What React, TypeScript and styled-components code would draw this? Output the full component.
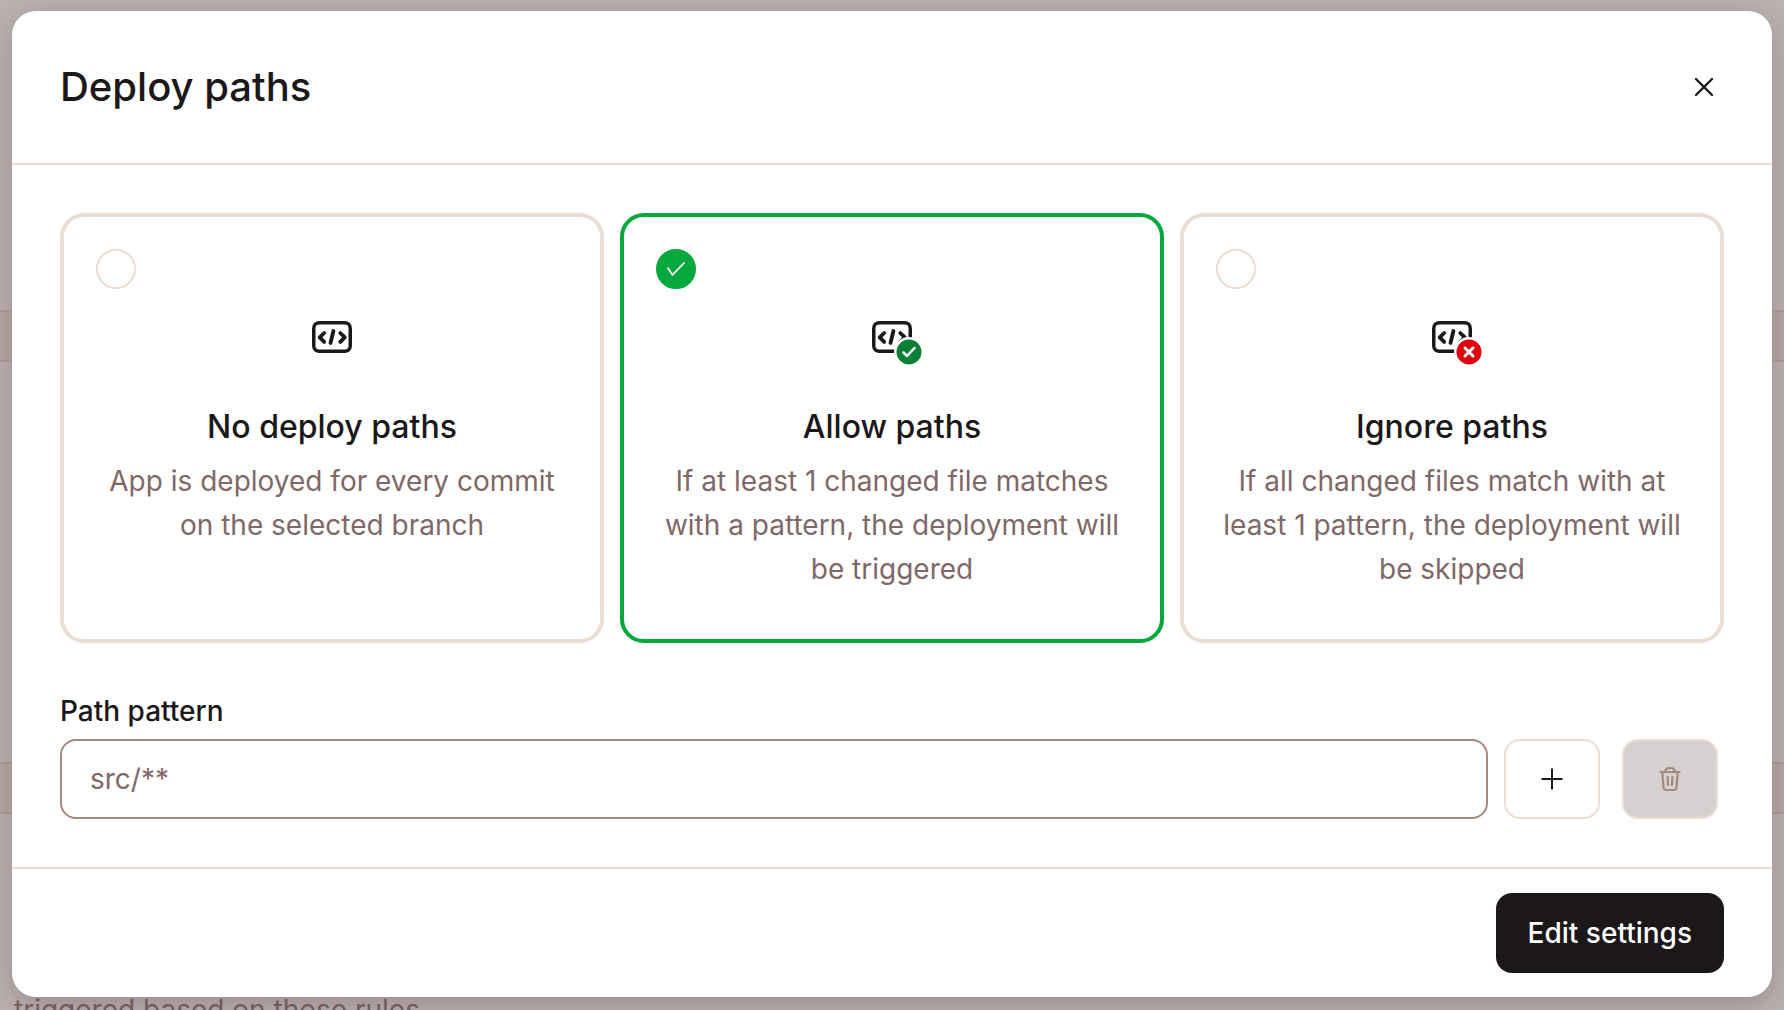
import React, { useState } from "react";
import styled, { createGlobalStyle } from "styled-components";

const color = {
  ink: "#1c1819",
  muted: "#7f6868",
  line: "#ebddd5",
  fieldLine: "#a5887f",
  green: "#04a83c",
  disabled: "#d6d0d0",
};

const GlobalStyle = createGlobalStyle`
  * { box-sizing: border-box; }
  body {
    margin: 0;
    overflow: hidden;
    font-family: Inter, "Liberation Sans", sans-serif;
    font-optical-sizing: none;
    color: ${color.ink};
  }
  h1, h2, p { margin: 0; }
`;

const Page = styled.div`
  position: relative;
  height: 100vh;
  overflow: hidden;
  background: #bdb1b1;
`;

const Backdrop = styled.div`
  display: flex;
  flex-direction: column;
  padding-top: 310px;
`;

const Band = styled.div`
  height: 52px;
  margin-bottom: 400px;
  background: #b8a8a6;
  border-top: 2px solid #b0a09d;
  border-bottom: 2px solid #b0a09d;

  &:last-of-type { margin-bottom: 174px; }
`;

const BackdropText = styled.p`
  padding-left: 14px;
  font-size: 28px;
  line-height: 44px;
  color: #7b6464;
`;

const Modal = styled.form`
  position: absolute;
  top: 11px;
  left: 12px;
  right: 12px;
  background: #fff;
  border-radius: 24px;
  box-shadow: 0 8px 32px rgba(40, 20, 20, 0.24);
`;

const Header = styled.header`
  display: flex;
  align-items: center;
  justify-content: space-between;
  padding: 48px;
  border-bottom: 2px solid ${color.line};
`;

const Title = styled.h1`
  font-size: 40px;
  line-height: 56px;
  font-weight: 500;
`;

const CloseButton = styled.button`
  display: flex;
  align-items: center;
  justify-content: center;
  width: 40px;
  height: 40px;
  padding: 0;
  border: 0;
  background: none;
  color: ${color.ink};
`;

const Body = styled.div`
  display: flex;
  flex-direction: column;
  gap: 48px;
  padding: 48px;
`;

const Options = styled.div`
  display: grid;
  grid-template-columns: repeat(3, 1fr);
  gap: 16px;
`;

const Card = styled.label<{ $selected: boolean }>`
  display: flex;
  flex-direction: column;
  padding: 32px 28px 48px;
  border: 4px solid ${(p) => (p.$selected ? color.green : color.line)};
  border-radius: 24px;
  text-align: center;
  cursor: pointer;
`;

const RadioSlot = styled.span`
  display: grid;
  width: 40px;
  height: 40px;
  margin-left: 4px;

  > * { grid-area: 1 / 1; }
`;

const Radio = styled.input`
  appearance: none;
  width: 40px;
  height: 40px;
  margin: 0;
  border: 2px solid ${color.line};
  border-radius: 50%;

  &:checked {
    border-color: ${color.green};
    background: ${color.green};
  }
`;

const IconBox = styled.span`
  display: flex;
  justify-content: center;
  padding: 24px 0 26px;
`;

const CardTitle = styled.h2`
  margin-bottom: 8px;
  font-size: 32px;
  line-height: 48px;
  font-weight: 500;
`;

const CardText = styled.p`
  font-size: 28px;
  line-height: 44px;
  color: ${color.muted};
`;

const Field = styled.div`
  display: flex;
  flex-direction: column;
  gap: 8px;
`;

const FieldLabel = styled.label`
  font-size: 28px;
  line-height: 40px;
  font-weight: 500;
`;

const FieldRow = styled.div`
  display: flex;
  gap: 16px;
`;

const TextInput = styled.input`
  flex: 1;
  min-width: 0;
  height: 80px;
  padding: 0 28px;
  border: 2px solid ${color.fieldLine};
  border-radius: 16px;
  font: inherit;
  font-size: 28px;
  color: ${color.ink};

  &::placeholder { color: ${color.muted}; opacity: 1; }
`;

const Actions = styled.div`
  display: flex;
  gap: 22px;
  padding-right: 6px;
`;

const IconButton = styled.button`
  display: flex;
  align-items: center;
  justify-content: center;
  width: 96px;
  height: 80px;
  padding: 0;
  border: 2px solid ${color.line};
  border-radius: 16px;
  background: #fff;
  color: ${color.ink};

  &:disabled {
    background: ${color.disabled};
    color: ${color.fieldLine};
  }
`;

const Footer = styled.footer`
  display: flex;
  justify-content: flex-end;
  padding: 24px 48px;
  border-top: 2px solid ${color.line};
`;

const SubmitButton = styled.button`
  height: 80px;
  padding: 0 32px;
  border: 0;
  border-radius: 16px;
  background: ${color.ink};
  color: #fff;
  font: inherit;
  font-size: 28px;
  font-weight: 500;
`;

type Badge = "none" | "allow" | "ignore";

function CodeIcon({ badge }: { badge: Badge }) {
  return (
    <svg width="64" height="64" viewBox="0 0 64 64" fill="none" strokeLinecap="round" strokeLinejoin="round" aria-hidden="true">
      <g stroke={color.ink}>
        <rect x="13.75" y="9.75" width="36.5" height="28.5" rx="5.5" strokeWidth="3.5" />
        <path d="M24.200 20 19.700 24.400l4.500 4.500M40.300 20l4.500 4.400-4.500 4.500M33.400 18 30.500 30" strokeWidth="3.800" />
      </g>
      {badge !== "none" && (
        <>
          <circle cx="49" cy="39" r="15" fill="#fff" />
          <circle cx="49" cy="39" r="12.500" fill={badge === "allow" ? "#0a8037" : "#e0000f"} />
          {badge === "allow" ? (
            <path d="m43.500 39.500 3.500 3.500 7.500-8" stroke="#fff" strokeWidth="2.500" />
          ) : (
            <path d="m45 35 8 8M53 35l-8 8" stroke="#fff" strokeWidth="3" />
          )}
        </>
      )}
    </svg>
  );
}

function CheckMark() {
  return (
    <svg width="40" height="40" viewBox="0 0 40 40" fill="none" pointerEvents="none" aria-hidden="true">
      <path d="m11.500 18.500 5 7.300L28.500 13.500" stroke="#fff" strokeWidth="1.700" />
    </svg>
  );
}

const options: { id: Badge; title: string; text: string }[] = [
  { id: "none", title: "No deploy paths", text: "App is deployed for every commit on the selected branch" },
  {
    id: "allow",
    title: "Allow paths",
    text: "If at least 1 changed file matches with a pattern, the deployment will be triggered",
  },
  {
    id: "ignore",
    title: "Ignore paths",
    text: "If all changed files match with at least 1 pattern, the deployment will be skipped",
  },
];

export default function App() {
  const [selected, setSelected] = useState<Badge>("allow");

  return (
    <Page>
      <GlobalStyle />
      <Backdrop aria-hidden="true">
        <Band />
        <Band />
        <BackdropText>triggered based on those rules.</BackdropText>
      </Backdrop>
      <Modal role="dialog" aria-labelledby="title" onSubmit={(e) => e.preventDefault()}>
        <Header>
          <Title id="title">Deploy paths</Title>
          <CloseButton type="button" aria-label="Close">
            <svg width="24" height="24" viewBox="0 0 24 24" fill="none" stroke="currentColor" strokeWidth="2.400" strokeLinecap="round">
              <path d="m4 4 16 16M20 4 4 20" />
            </svg>
          </CloseButton>
        </Header>
        <Body>
          <Options role="radiogroup" aria-labelledby="title">
            {options.map((o) => (
              <Card key={o.id} $selected={selected === o.id}>
                <RadioSlot>
                  <Radio
                    type="radio"
                    name="mode"
                    value={o.id}
                    checked={selected === o.id}
                    onChange={() => setSelected(o.id)}
                  />
                  {selected === o.id && <CheckMark />}
                </RadioSlot>
                <IconBox>
                  <CodeIcon badge={o.id} />
                </IconBox>
                <CardTitle>{o.title}</CardTitle>
                <CardText>{o.text}</CardText>
              </Card>
            ))}
          </Options>
          <Field>
            <FieldLabel htmlFor="pattern">Path pattern</FieldLabel>
            <FieldRow>
              <TextInput id="pattern" type="text" placeholder="src/**" />
              <Actions>
                <IconButton type="button" aria-label="Add pattern">
                  <svg width="24" height="24" viewBox="0 0 24 24" fill="none" stroke="currentColor" strokeWidth="2">
                    <path d="M12 1.500v21M1.500 12h21" />
                  </svg>
                </IconButton>
                <IconButton type="button" aria-label="Remove pattern" disabled>
                  <svg width="24" height="26" viewBox="0 0 24 26" fill="none" stroke="currentColor" strokeWidth="2.200" strokeLinecap="round" strokeLinejoin="round">
                    <path d="M2.500 6h19M7 5.500C7.500 3 9.500 2 12 2s4.500 1 5 3.500M4.300 6l1.200 15.500C5.700 23.300 6.700 24 8.200 24h7.600c1.500 0 2.500-.7 2.700-2.500L19.700 6M9.700 11l.3 8M14.300 11l-.3 8" />
                  </svg>
                </IconButton>
              </Actions>
            </FieldRow>
          </Field>
        </Body>
        <Footer>
          <SubmitButton type="submit">Edit settings</SubmitButton>
        </Footer>
      </Modal>
    </Page>
  );
}
